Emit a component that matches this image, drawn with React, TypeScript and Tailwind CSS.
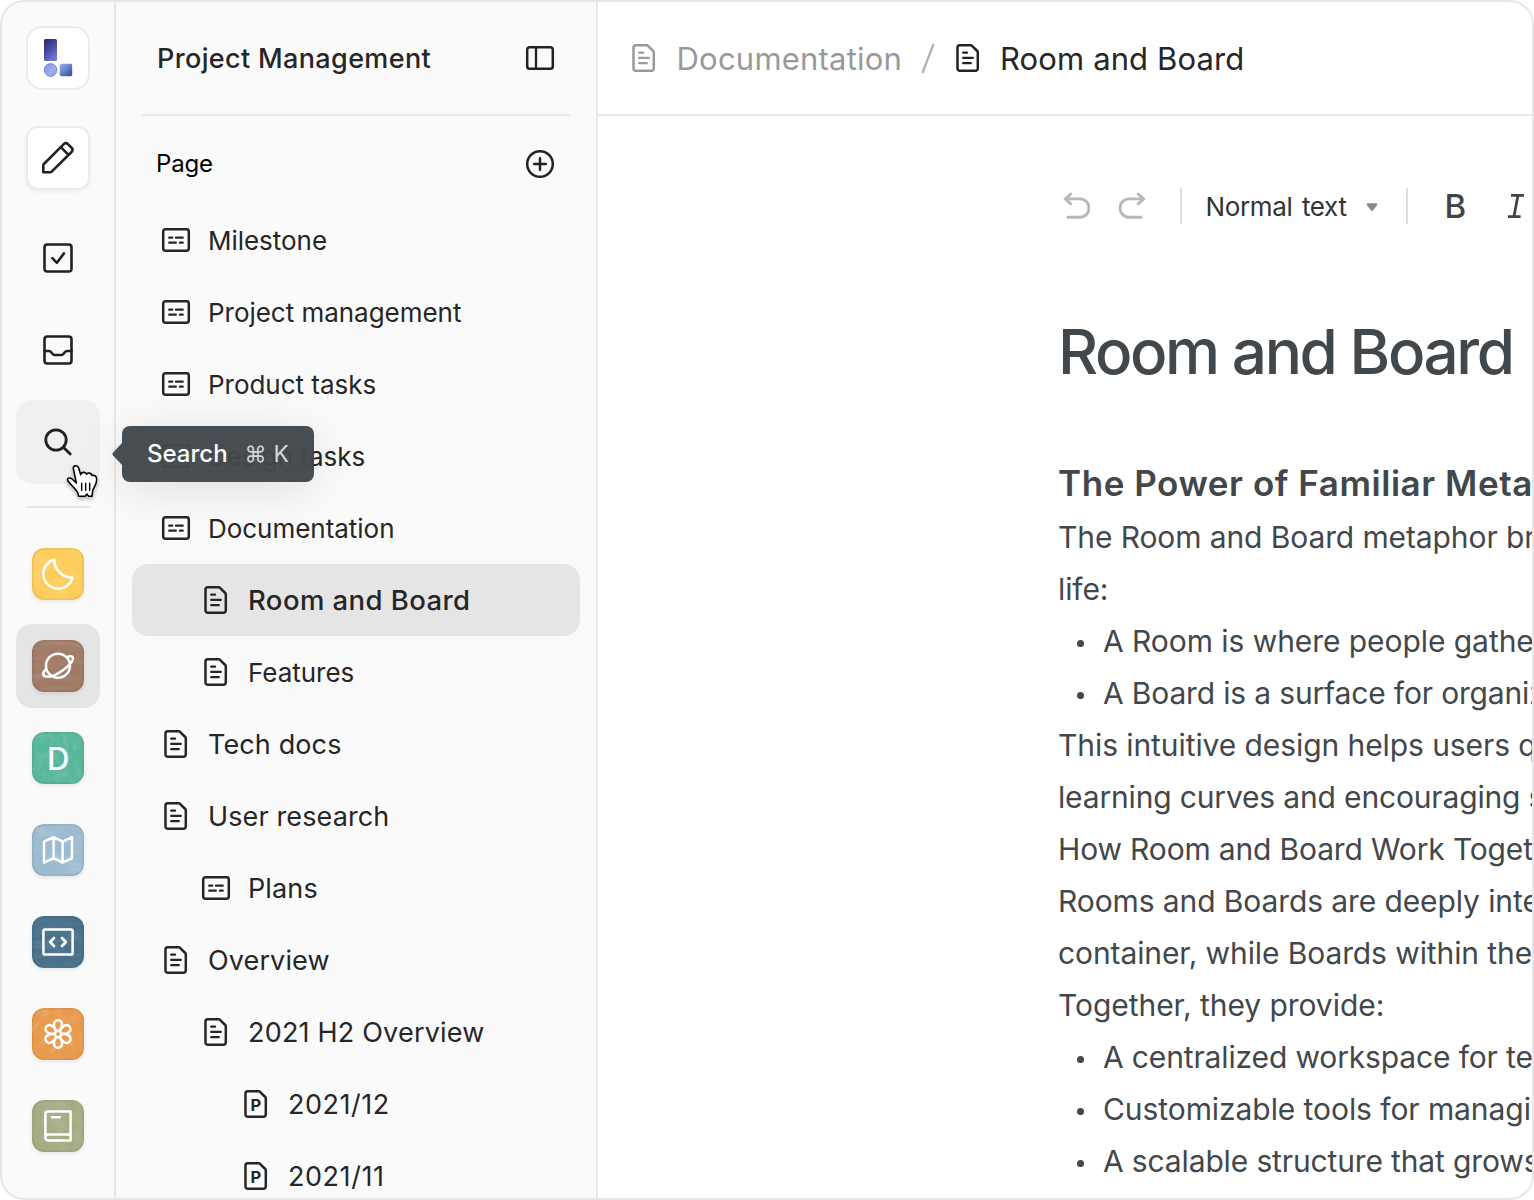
import React from 'react';
import type { ReactNode } from 'react';

type IconKind = 'board' | 'doc' | 'page';

function BoardIcon() {
  return (
    <svg width="32" height="32" viewBox="0 0 32 32" fill="none" stroke="currentColor" strokeWidth="2.5" className="shrink-0">
      <rect x="3.2" y="5.2" width="25.6" height="21.6" rx="2.2" />
      <path d="M9.3 13.7h3M16 13.7h6.7M9.3 18.7h6.5M20 18.7h2.7" strokeWidth="2.3" strokeLinecap="round" />
    </svg>
  );
}

function SheetIcon({ children }: { children: ReactNode }) {
  return (
    <svg width="32" height="32" viewBox="0 0 32 32" fill="none" stroke="currentColor" strokeWidth="2.5" strokeLinejoin="round" className="shrink-0">
      <path d="M7.8 3.2H18.6a2 2 0 0 1 1.4.6L25.2 9a2 2 0 0 1 .6 1.4V26.5a2.3 2.3 0 0 1-2.3 2.3H7.8a2.3 2.3 0 0 1-2.3-2.3V5.5a2.3 2.3 0 0 1 2.3-2.3z" />
      {children}
    </svg>
  );
}

function DocIcon() {
  return (
    <SheetIcon>
      <path d="M11.2 10.7H15M11.2 15.9h9.6M11.2 21.2h7.6" strokeWidth="2.3" strokeLinecap="round" />
    </SheetIcon>
  );
}

function PageIcon() {
  return (
    <SheetIcon>
      <text x="15.9" y="22.8" textAnchor="middle" fontFamily="Inter, sans-serif" fontWeight="700" fontSize="16.5" fill="currentColor" stroke="none">P</text>
    </SheetIcon>
  );
}

const icons: Record<IconKind, ReactNode> = { board: <BoardIcon />, doc: <DocIcon />, page: <PageIcon /> };

type Row = { label: string; icon: IconKind; pad: string; text: string; active?: boolean };

const level = ['pl-[28px]', 'pl-[68px]', 'pl-[108px]'];
const small = 'text-[26px] pt-[2px] tracking-[-0.03px]';
const regular = 'text-[27px] tracking-[0.12px]';

const rows: Row[] = [
  { label: 'Milestone', icon: 'board', pad: level[0], text: small },
  { label: 'Project management', icon: 'board', pad: level[0], text: small },
  { label: 'Product tasks', icon: 'board', pad: level[0], text: small },
  { label: 'Design tasks', icon: 'board', pad: level[0], text: small },
  { label: 'Documentation', icon: 'board', pad: level[0], text: small },
  { label: 'Room and Board', icon: 'doc', pad: level[1], text: 'text-[27.5px] pt-[2px] font-medium tracking-[0.42px]', active: true },
  { label: 'Features', icon: 'doc', pad: level[1], text: small },
  { label: 'Tech docs', icon: 'doc', pad: level[0], text: regular },
  { label: 'User research', icon: 'doc', pad: level[0], text: regular },
  { label: 'Plans', icon: 'board', pad: level[1], text: regular },
  { label: 'Overview', icon: 'doc', pad: level[0], text: regular },
  { label: '2021 H2 Overview', icon: 'doc', pad: level[1], text: 'text-[27px] tracking-[0.2px]' },
  { label: '2021/12', icon: 'page', pad: level[2], text: 'text-[27px] tracking-[0.5px]' },
  { label: '2021/11', icon: 'page', pad: level[2], text: 'text-[27px] tracking-[0.55px]' },
];

function Tile({ color, freq, seed, tint, children }: { color: string; freq: string; seed: number; tint: string; children: ReactNode }) {
  const id = `grain-${seed}`;
  return (
    <div className={`relative size-[52px] overflow-hidden rounded-[12px] shadow-[0_2px_4px_rgba(0,0,0,0.08)] ${color}`}>
      <svg width="52" height="52" viewBox="0 0 52 52" fill="none" stroke="#fff" strokeWidth="2.5" strokeLinecap="round" strokeLinejoin="round">
        <filter id={id} x="0" y="0" width="100%" height="100%">
          <feTurbulence type="fractalNoise" baseFrequency={freq} numOctaves={3} seed={seed} />
          <feColorMatrix values={`0 0 0 0 ${tint} 0 0 0 0 ${tint} 0 0 0 0 ${tint} 1.6 0 0 0 -0.62`} />
        </filter>
        <rect width="52" height="52" stroke="none" fill="#fff" filter={`url(#${id})`} opacity="0.2" />
        <rect x="1" y="1" width="50" height="50" rx="11" stroke="#000" strokeOpacity="0.05" strokeWidth="2" />
        {children}
      </svg>
    </div>
  );
}

function RailItem({ state = '', children }: { state?: string; children: ReactNode }) {
  return <div className={`flex size-[84px] items-center justify-center rounded-[16px] ${state}`}>{children}</div>;
}

function RailIcon({ width = 2.6, children }: { width?: number; children: ReactNode }) {
  return (
    <svg width="40" height="40" viewBox="0 0 40 40" fill="none" stroke="#222" strokeWidth={width} strokeLinecap="round" strokeLinejoin="round">
      {children}
    </svg>
  );
}

function Rail() {
  return (
    <nav className="flex w-[116px] shrink-0 flex-col items-center border-r-2 border-[#e7e7e7] bg-[#fafafa] pl-[2px] pt-[26px]">
      <div className="flex size-[64px] shrink-0 items-center justify-center rounded-[16px] border-2 border-[#ebebeb] bg-white">
        <svg width="60" height="60" viewBox="0 0 60 60">
          <defs>
            <linearGradient id="bar" x1="0" y1="0" x2="0.6" y2="1">
              <stop offset="0" stopColor="#262a5e" />
              <stop offset="0.5" stopColor="#4547a5" />
              <stop offset="1" stopColor="#6f78cf" />
            </linearGradient>
            <linearGradient id="dot" x1="0" y1="0" x2="1" y2="1">
              <stop offset="0" stopColor="#7b8adf" />
              <stop offset="0.6" stopColor="#a2b0f0" />
              <stop offset="1" stopColor="#8794dc" />
            </linearGradient>
            <linearGradient id="box" x1="0" y1="0" x2="1" y2="1">
              <stop offset="0" stopColor="#9fb2f0" />
              <stop offset="1" stopColor="#2b4c92" />
            </linearGradient>
          </defs>
          <rect x="16" y="11" width="13" height="22" rx="1.6" fill="url(#bar)" />
          <circle cx="22.6" cy="42" r="6.4" fill="url(#dot)" stroke="#7380c8" strokeWidth="0.8" />
          <rect x="31.7" y="35.8" width="12.5" height="12.4" rx="1.6" fill="url(#box)" />
        </svg>
      </div>
      <div className="mt-[36px] flex size-[64px] shrink-0 items-center justify-center rounded-[12px] border-2 border-[#ebebeb] bg-white shadow-[0_2px_4px_rgba(0,0,0,0.05)]">
        <RailIcon>
          <path d="M5.3 34.3V27.4a2 2 0 0 1 .6-1.4L26 5.9a2.6 2.6 0 0 1 3.7 0l4.1 4.1a2.6 2.6 0 0 1 0 3.7L13.7 33.7a2 2 0 0 1-1.4.6zM22.8 9.2l7.7 7.7" />
        </RailIcon>
      </div>
      <div className="mt-[26px] flex flex-col gap-2">
        <RailItem>
          <RailIcon>
            <rect x="6.5" y="6.5" width="27" height="27" rx="2.8" />
            <path d="M14.4 20.2l4.5 4.6 7-9.4" />
          </RailIcon>
        </RailItem>
        <RailItem>
          <RailIcon>
            <rect x="6.5" y="6.5" width="27" height="27" rx="2.8" />
            <path d="M6.5 21H11c1 0 1.6.4 2.2 1.2l1.2 1.6c.6.8 1.2 1.2 2.2 1.2h6.8c1 0 1.6-.4 2.2-1.2l1.2-1.6c.6-.8 1.2-1.2 2.2-1.2h4.5" />
          </RailIcon>
        </RailItem>
        <RailItem state="bg-[#f0f0f0]">
          <RailIcon width={2.8}>
            <circle cx="18" cy="18" r="10.2" />
            <path d="M25.6 25.6l6.6 6.4" />
          </RailIcon>
        </RailItem>
      </div>
      <div className="mb-6 mt-[22px] h-[2px] w-[64px] shrink-0 bg-[#e8e8e8]" />
      <div className="flex flex-col gap-2">
        <RailItem>
          <Tile color="bg-[#fdcc59]" freq="0.05 0.09" seed={3} tint="1">
            <path d="M22.2 11.6A14.8 14.8 0 1 0 40.4 29.6A17.9 17.9 0 0 1 22.2 11.6z" />
          </Tile>
        </RailItem>
        <RailItem state="bg-[#e5e5e5]">
          <Tile color="bg-[#a07a64]" freq="0.03 0.12" seed={8} tint="0.75">
            <circle cx="26" cy="25.7" r="12" />
            <path d="M35.2 17C38.2 16 40.6 16 41 17.9c.5 3-3.9 7.6-8.7 11.3C26 34 19 37 14.7 36.6c-4.4-.4-4.5-3.5-1.1-7.2" />
          </Tile>
        </RailItem>
        <RailItem>
          <Tile color="bg-[#57b79c]" freq="0.16 0.1" seed={5} tint="0.8">
            <text x="26.3" y="38" textAnchor="middle" fontFamily="Inter, sans-serif" fontWeight="500" fontSize="31" fill="#fff" stroke="none">D</text>
          </Tile>
        </RailItem>
        <RailItem>
          <Tile color="bg-[#9cbbd0]" freq="0.04 0.1" seed={12} tint="0.95">
            <path d="M12 17.6l9.6-4.4 9 4.4 9.4-4.4V34.2l-9.4 4.4-9-4.4-9.6 4.4zM21.6 13.2v21M30.6 17.6v21" />
          </Tile>
        </RailItem>
        <RailItem>
          <Tile color="bg-[#49718c]" freq="0.03 0.15" seed={21} tint="0.65">
            <rect x="11.4" y="13.4" width="29.2" height="25.2" rx="1.6" />
            <path d="M22 22l-3.8 4 3.8 4M30 22l3.8 4-3.8 4" strokeWidth="2.7" />
          </Tile>
        </RailItem>
        <RailItem>
          <Tile color="bg-[#e9994b]" freq="0.12 0.12" seed={30} tint="0.95">
            <circle cx="26" cy="26" r="3.2" />
            {[0, 60, 120, 180, 240, 300].map((a) => (
              <path key={a} transform={`rotate(${a} 26 26)`} d="M24.3 23.2C22.4 20.6 21.9 18.6 22 16.2a4 4 0 0 1 8 0c.1 2.4-.4 4.4-2.3 7" />
            ))}
          </Tile>
        </RailItem>
        <RailItem>
          <Tile color="bg-[#a5ac84]" freq="0.09 0.07" seed={41} tint="0.8">
            <path d="M38.6 34.6V11.4H15.6a2.2 2.2 0 0 0-2.2 2.2v24.2a2.6 2.6 0 0 0 2.6 2.6h22.6v-5.8H16a2.6 2.6 0 0 0-2.6 2.6M20 17.3h7.8" />
          </Tile>
        </RailItem>
      </div>
    </nav>
  );
}

function SearchTooltip() {
  return (
    <div className="absolute left-[122px] top-[426px] z-10 h-[56px] w-[192px] rounded-[8px] bg-[#42474b]/97 shadow-[0_8px_48px_rgba(0,0,0,0.11)]">
      <svg width="11" height="22" viewBox="0 0 11 22" className="absolute -left-[10px] top-[17px]">
        <path d="M10 0v22L.9 12.2a1.8 1.8 0 0 1 0-2.4z" fill="#484d51" />
      </svg>
      <div className="flex h-full items-center pl-[25px] leading-none">
        <span className="text-[24px] font-medium text-white">Search</span>
        <span className="ml-[17px] text-[22px] text-[#d3d5d6]">⌘</span>
        <span className="ml-[7px] text-[23px] text-[#d3d5d6]">K</span>
      </div>
    </div>
  );
}

function HandCursor() {
  return (
    <svg width="36" height="38" viewBox="196 732 108 114" className="absolute left-[65.3px] top-[464px] z-20 drop-shadow-[0_2px_2px_rgba(0,0,0,0.3)]">
      <path
        d="M221 746C220 735 234 734 237 744L243 764C245 755 258 755 261 763C264 757 275 758 277 767C282 764 291 767 291 777C292 790 284 800 279 812L277 829H267L262 822L256 829H237L234 817C226 804 211 792 205 783C200 774 210 771 217 777L230 789Z"
        fill="#fff"
        stroke="#000"
        strokeWidth="4.6"
        strokeLinejoin="round"
      />
      <path d="M246 790v21M258 790v21M270 790v21" stroke="#000" strokeWidth="4.4" strokeLinecap="round" />
    </svg>
  );
}

function Sidebar() {
  return (
    <aside className="flex w-[482px] shrink-0 flex-col border-r-2 border-[#e9e9e9] bg-[#fafafa] text-[#262626]">
      <header className="mx-[26px] flex h-[116px] shrink-0 items-center justify-between border-b-2 border-[#e9e9e9] pl-[15px] pr-[14px] pt-[2px]">
        <h1 className="text-[27px] font-medium leading-none tracking-[0.36px]">Project Management</h1>
        <svg width="32" height="32" viewBox="0 0 32 32" fill="none" stroke="#222" strokeWidth="2.5">
          <rect x="3.2" y="5.2" width="25.6" height="21.6" rx="2.6" />
          <path d="M12 5v22" strokeWidth="2.3" />
        </svg>
      </header>
      <div className="flex h-[96px] shrink-0 items-center justify-between pl-[40px] pr-[40px]">
        <h2 className="text-[24px] leading-none tracking-[-0.2px] text-black">Page</h2>
        <svg width="32" height="32" viewBox="0 0 32 32" fill="none" stroke="#222" strokeWidth="2.5" strokeLinecap="round">
          <circle cx="16" cy="16" r="12.8" />
          <path d="M16 10.2v11.6M10.2 16h11.6" />
        </svg>
      </div>
      <ul className="-mt-2 flex flex-col px-4">
        {rows.map((r) => (
          <li key={r.label} className={`flex h-[72px] shrink-0 items-center gap-4 rounded-[16px] ${r.pad} ${r.active ? 'bg-[#e5e5e5]' : ''}`}>
            {icons[r.icon]}
            <span className={`whitespace-nowrap leading-none ${r.text}`}>{r.label}</span>
          </li>
        ))}
      </ul>
    </aside>
  );
}

function HistoryIcon({ flip = '' }: { flip?: string }) {
  return (
    <svg width="32" height="32" viewBox="0 0 32 32" fill="none" stroke="#b8b8b8" strokeWidth="2.9" className={`shrink-0 ${flip}`}>
      <path d="M13.6 3.2L7.4 8.9l6.2 5.7M7.5 8.9H21.8a9.2 9.2 0 0 1 0 18.4H8.7" />
    </svg>
  );
}

function Toolbar() {
  return (
    <div className="flex h-[36px] items-center text-[#3f4448]">
      <HistoryIcon />
      <HistoryIcon flip="ml-[29px] -scale-x-100" />
      <div className="ml-[29px] h-[36px] w-[2px] shrink-0 bg-[#dcdcdc]" />
      <span className="ml-[23.5px] w-[141px] whitespace-nowrap pt-[2px] text-[26px] leading-none tracking-[-0.35px] text-[#333] [word-spacing:2.5px]">Normal text</span>
      <svg width="12" height="8" viewBox="0 0 12 8" className="ml-[19.5px] mt-[2px] shrink-0">
        <path d="M2 .2h8c1.2 0 1.7 1.1 1 2L7.1 7.2a1.4 1.4 0 0 1-2.2 0L1 2.2C.3 1.3.8.2 2 .2z" fill="#888" />
      </svg>
      <div className="ml-[28px] h-[36px] w-[2px] shrink-0 bg-[#dcdcdc]" />
      <span className="ml-[36.5px] w-[22px] text-[33px] font-medium leading-none">B</span>
      <svg width="20" height="26" viewBox="0 0 20 26" fill="none" stroke="currentColor" strokeWidth="2.8" className="ml-[40.5px] shrink-0">
        <path d="M4 2.4h13M1 23.6h12.6M10.9 2.4L7 23.6" />
      </svg>
    </div>
  );
}

function Line({ tracking = 'tracking-[-0.1px]', children }: { tracking?: string; children: ReactNode }) {
  return <p className={`h-[52px] whitespace-nowrap leading-[48px] ${tracking}`}>{children}</p>;
}

function Bullet({ tracking = 'tracking-[-0.14px]', children }: { tracking?: string; children: ReactNode }) {
  return (
    <div className="flex h-[52px] items-center">
      <span className="ml-[19px] mr-[19px] size-[7px] shrink-0 rounded-full bg-[#42474b]" />
      <Line tracking={tracking}>{children}</Line>
    </div>
  );
}

function Editor() {
  return (
    <main className="flex min-w-0 flex-1 flex-col bg-white">
      <header className="flex h-[116px] shrink-0 items-center border-b-2 border-[#e9e9e9] pl-[30px] pt-[2px] text-[31px] leading-none">
        <span className="text-[#999]"><DocIcon /></span>
        <span className="ml-[16.5px] w-[226px] whitespace-nowrap tracking-[0.22px] text-[#999]">Documentation</span>
        <svg width="16" height="32" viewBox="0 0 16 32" fill="none" className="ml-[17.5px] shrink-0">
          <path d="M2.4 31L13.6 2" stroke="#b3b3b3" strokeWidth="2.3" />
        </svg>
        <span className="ml-[16px] text-[#222]"><DocIcon /></span>
        <span className="ml-[16px] whitespace-nowrap tracking-[0.12px] text-[#262626]">Room and Board</span>
      </header>
      <div className="pl-[460px] pt-[72px]">
        <Toolbar />
        <h1 className="mt-[80px] whitespace-nowrap text-[62px] font-[550] leading-[96px] tracking-[-2.4px] text-[#42474b]">Room and Board</h1>
        <h2 className="mt-[56px] whitespace-nowrap text-[35px] font-semibold leading-[54px] tracking-[0.55px] text-[#42474b]">The Power of Familiar Metaphors</h2>
        <div className="mt-[3px] text-[30px] text-[#42474b]">
          <Line>The Room and Board metaphor brings</Line>
          <Line>life:</Line>
          <Bullet tracking="tracking-[-0.06px]">A Room is where people gather</Bullet>
          <Bullet tracking="tracking-[-0.16px]">A Board is a surface for organizing</Bullet>
          <Line tracking="tracking-[-0.08px]">This intuitive design helps users quickly</Line>
          <Line tracking="tracking-[-0.16px]">learning curves and encouraging seamless</Line>
          <Line tracking="tracking-[-0.16px]">How Room and Board Work Together</Line>
          <Line>Rooms and Boards are deeply integrated</Line>
          <Line>container, while Boards within them</Line>
          <Line tracking="tracking-[-0.05px]">Together, they provide:</Line>
          <Bullet>A centralized workspace for teams</Bullet>
          <Bullet tracking="tracking-[-0.07px]">Customizable tools for managing</Bullet>
          <Bullet>A scalable structure that grows</Bullet>
        </div>
      </div>
    </main>
  );
}

export default function App() {
  return (
    <div className="h-[1200px] w-[1534px] overflow-hidden bg-white font-[Inter,sans-serif]">
      <div className="relative flex h-full w-full overflow-hidden rounded-[24px]">
        <Rail />
        <Sidebar />
        <Editor />
        <SearchTooltip />
        <HandCursor />
        <div className="pointer-events-none absolute inset-0 z-30 rounded-[24px] border-2 border-[#e6e6e6]" />
      </div>
    </div>
  );
}
